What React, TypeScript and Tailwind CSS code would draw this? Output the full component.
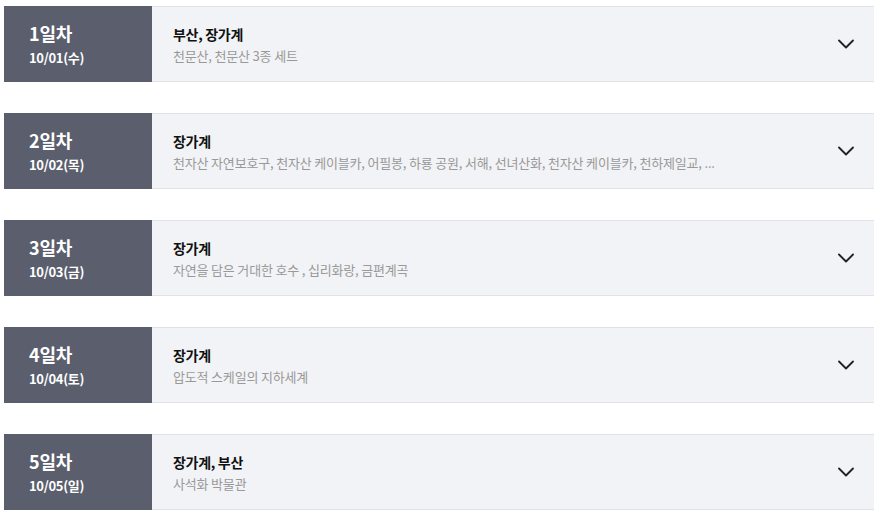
import React from 'react';
import { ChevronDown } from 'lucide-react';

interface Day {
  day: string;
  date: string;
  title: string;
  places: string;
}

const days: Day[] = [
  { day: '1일차', date: '10/01(수)', title: '부산, 장가계', places: '천문산, 천문산 3종 세트' },
  {
    day: '2일차',
    date: '10/02(목)',
    title: '장가계',
    places: '천자산 자연보호구, 천자산 케이블카, 어필봉, 하룡 공원, 서해, 선녀산화, 천자산 케이블카, 천하제일교, ...',
  },
  { day: '3일차', date: '10/03(금)', title: '장가계', places: '자연을 담은 거대한 호수 , 십리화랑, 금편계곡' },
  { day: '4일차', date: '10/04(토)', title: '장가계', places: '압도적 스케일의 지하세계' },
  { day: '5일차', date: '10/05(일)', title: '장가계, 부산', places: '사석화 박물관' },
];

const DayRow: React.FC<{ item: Day }> = ({ item }) => (
  <div className="flex h-[76px] w-[870px] cursor-pointer">
    <div className="flex w-[148px] flex-col justify-center bg-[#5a5e6d] pl-[25px] text-white">
      <p className="text-[18px] font-bold leading-[22px] tracking-[-0.2px]">{item.day}</p>
      <p className="mt-[5px] text-[13px] font-bold leading-[18px] tracking-[-0.3px]">{item.date}</p>
    </div>
    <div className="flex flex-1 items-center border-y border-[#e1e2e5] bg-[#f2f3f6] pl-[21px] pr-[14px]">
      <div className="flex flex-1 flex-col">
        <p className="text-[14px] font-semibold leading-[20px] tracking-[-0.3px] text-[#111]">{item.title}</p>
        <p className="mt-[3px] text-[13px] leading-[18px] tracking-[-0.18px] text-[#999]">{item.places}</p>
      </div>
      <ChevronDown size={28} strokeWidth={1.6} className="text-[#222]" />
    </div>
  </div>
);

export default function App() {
  return (
    <div
      className="flex min-h-[522px] w-[885px] flex-col gap-[31px] bg-white pl-[4px] pt-[6px]"
      style={{ fontFamily: '"Noto Sans CJK KR", "Noto Sans", sans-serif' }}
    >
      {days.map(d => (
        <DayRow key={d.day} item={d} />
      ))}
    </div>
  );
}
